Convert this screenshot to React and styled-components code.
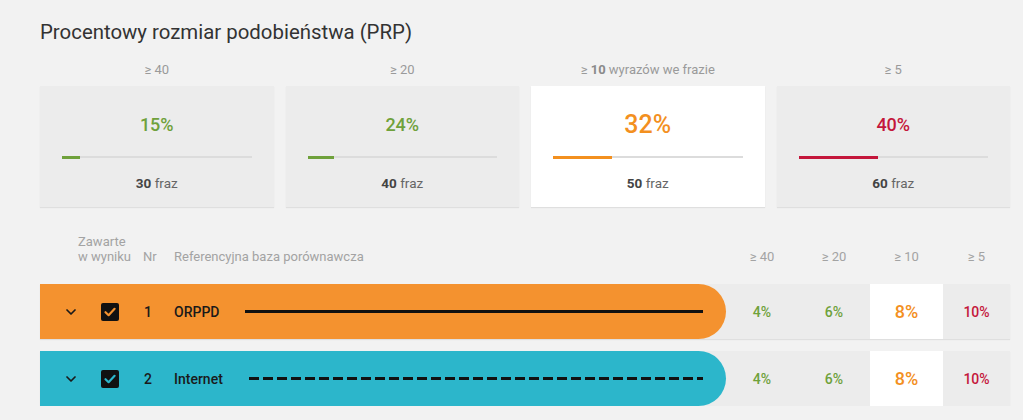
import styled, { createGlobalStyle } from "styled-components";
import { ChevronDown } from "lucide-react";

const GREEN = "#6fa13b";
const ORANGE = "#f3901f";
const RED = "#c4163b";

const GlobalStyle = createGlobalStyle`
  body {
    margin: 0;
    background: #f2f2f2;
    font-family: Roboto, "Liberation Sans", sans-serif;
  }
`;

const progi = [
  { label: <>≥ 40</>, value: "15%", color: GREEN, fill: 9.5, count: 30 },
  { label: <>≥ 20</>, value: "24%", color: GREEN, fill: 14, count: 40 },
  { label: <>≥ <b>10</b> wyrazów we frazie</>, value: "32%", color: ORANGE, fill: 31, count: 50, active: true },
  { label: <>≥ 5</>, value: "40%", color: RED, fill: 42, count: 60 },
];

const bazy = [
  { nr: 1, name: "ORPPD", bg: "#f4922f", dashed: false, values: ["4%", "6%", "8%", "10%"] },
  { nr: 2, name: "Internet", bg: "#2cb6cb", dashed: true, values: ["4%", "6%", "8%", "10%"] },
];

const cellColors = [GREEN, GREEN, ORANGE, RED];

function Checkbox({ color }) {
  return (
    <svg width="18" height="18" viewBox="0 0 18 18">
      <rect x="0" y="0" width="18" height="18" rx="2" fill="#111" />
      <path d="M4.5 9.2 L7.6 12.2 L13.6 5.8" fill="none" stroke={color} strokeWidth="2.2" strokeLinecap="round" strokeLinejoin="round" />
    </svg>
  );
}

export default function App() {
  return (
    <>
      <GlobalStyle />
      <Page>
        <Tytul>Procentowy rozmiar podobieństwa (PRP)</Tytul>

        <Karty>
          {progi.map((p, i) => (
            <Kolumna key={i}>
              <Etykieta>{p.label}</Etykieta>
              <Karta $active={p.active}>
                <Procent $color={p.color} $big={p.active}>{p.value}</Procent>
                <Pasek>
                  <Wypelnienie $color={p.color} style={{ width: `${p.fill}%` }} />
                </Pasek>
                <Frazy><b>{p.count}</b> fraz</Frazy>
              </Karta>
            </Kolumna>
          ))}
        </Karty>

        <Naglowek>
          <NaglowekBaza>
            <Zawarte>Zawarte<br />w wyniku</Zawarte>
            <NrHead>Nr</NrHead>
            <span>Referencyjna baza porównawcza</span>
          </NaglowekBaza>
          <NaglowekProg>≥ 40</NaglowekProg>
          <NaglowekProg>≥ 20</NaglowekProg>
          <NaglowekProg>≥ 10</NaglowekProg>
          <NaglowekProg>≥ 5</NaglowekProg>
        </Naglowek>

        <Wiersze>
          {bazy.map((b) => (
            <Wiersz key={b.nr}>
              <Pigulka $bg={b.bg}>
                <ChevronDown size={16} strokeWidth={2.6} color="#1a1a1a" />
                <CheckWrap><Checkbox color={b.bg} /></CheckWrap>
                <Nr>{b.nr}</Nr>
                <Nazwa>{b.name}</Nazwa>
                <Linia $dashed={b.dashed} />
              </Pigulka>
              {b.values.map((v, i) => (
                <Komorka key={i} $active={i === 2} $color={cellColors[i]}>{v}</Komorka>
              ))}
            </Wiersz>
          ))}
        </Wiersze>
      </Page>
    </>
  );
}

const Page = styled.div`
  width: 970px;
  padding: 20px 13px 0 40px;
`;

const Tytul = styled.h1`
  margin: 0;
  font-size: 20.4px;
  line-height: 24px;
  font-weight: 400;
  color: #333;
`;

const Karty = styled.div`
  display: grid;
  grid-template-columns: repeat(4, 1fr);
  column-gap: 12px;
  margin-top: 18px;
`;

const Kolumna = styled.div`
  display: flex;
  flex-direction: column;
`;

const Etykieta = styled.div`
  text-align: center;
  font-size: 13px;
  line-height: 16px;
  color: #9a9a9a;
  margin-bottom: 8px;

  b {
    font-weight: 700;
    color: #8a8a8a;
  }
`;

const Karta = styled.div`
  height: 121px;
  box-sizing: border-box;
  padding: 27px 22px 0;
  display: flex;
  flex-direction: column;
  align-items: center;
  background: ${(p) => (p.$active ? "#ffffff" : "#ececec")};
  box-shadow: 0 1px 1px rgba(0, 0, 0, 0.08);
`;

const Procent = styled.div`
  font-size: ${(p) => (p.$big ? "25px" : "18px")};
  font-weight: 500;
  line-height: 24px;
  color: ${(p) => p.$color};
`;

const Pasek = styled.div`
  align-self: stretch;
  height: 2px;
  margin-top: 19px;
  background: #dcdcdc;
`;

const Wypelnienie = styled.div`
  height: 3px;
  margin-top: -0.5px;
  background: ${(p) => p.$color};
`;

const Frazy = styled.div`
  margin-top: 16px;
  font-size: 13.5px;
  line-height: 18px;
  color: #666;

  b {
    font-weight: 700;
    color: #444;
  }
`;

const siatka = `
  display: grid;
  grid-template-columns: 686px 72px 72px 73px 67px;
`;

const Naglowek = styled.div`
  ${siatka}
  margin-top: 27px;
  align-items: end;
  font-size: 13px;
  line-height: 15px;
  color: #a3a3a3;
`;

const NaglowekBaza = styled.div`
  display: flex;
  align-items: flex-end;
  padding-left: 38px;
`;

const Zawarte = styled.span`
  width: 65px;
`;

const NrHead = styled.span`
  width: 31px;
`;

const NaglowekProg = styled.div`
  text-align: center;
`;

const Wiersze = styled.div`
  display: flex;
  flex-direction: column;
  gap: 12px;
  margin-top: 20px;
`;

const Wiersz = styled.div`
  ${siatka}
  height: 55px;
  background: #ececec;
  box-shadow: 0 1px 1px rgba(0, 0, 0, 0.08);
`;

const Pigulka = styled.div`
  display: flex;
  align-items: center;
  padding-left: 23px;
  padding-right: 23px;
  background: ${(p) => p.$bg};
  border-radius: 0 28px 28px 0;
  color: #1a1a1a;
`;

const CheckWrap = styled.div`
  display: flex;
  margin-left: 22px;
`;

const Nr = styled.span`
  width: 30px;
  margin-left: 25px;
  font-size: 14px;
  font-weight: 500;
`;

const Nazwa = styled.span`
  font-size: 14px;
  font-weight: 500;
`;

const Linia = styled.div`
  flex: 1;
  height: 3px;
  margin-left: 26px;
  background: ${(p) =>
    p.$dashed
      ? "repeating-linear-gradient(90deg, #111 0 10px, transparent 10px 14px)"
      : "#111"};
`;

const Komorka = styled.div`
  display: flex;
  align-items: center;
  justify-content: center;
  background: ${(p) => (p.$active ? "#ffffff" : "transparent")};
  color: ${(p) => p.$color};
  font-size: ${(p) => (p.$active ? "18px" : "14px")};
  font-weight: 500;
`;
